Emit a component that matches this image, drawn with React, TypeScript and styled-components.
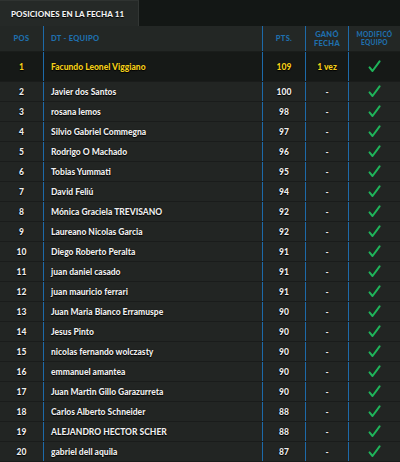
import React from "react";
import styled, { createGlobalStyle } from "styled-components";

const Global = createGlobalStyle`
  html, body { margin: 0; padding: 0; background: #131715; }
  body { font-family: Lato, "Open Sans", sans-serif; }
`;

const Page = styled.div`
  width: 400px;
  height: 462px;
  background: #131715;
  overflow: hidden;
`;

const TabBar = styled.div`
  display: flex;
  height: 26px;
`;

const Tab = styled.div`
  width: 139px;
  box-sizing: border-box;
  background: #252927;
  border-top: 1px solid #2f3331;
  border-right: 1px solid #323634;
  color: #f2f2f2;
  font-weight: 900;
  font-size: 8px;
  display: flex;
  align-items: center;
  padding-left: 11px;
  text-shadow: 0 1px 1px #000;
  letter-spacing: 0.1px;
`;

const cols = "43px 219px 43px 43px 52px";

const HeadRow = styled.div`
  display: grid;
  grid-template-columns: ${cols};
  height: 26px;
  background: #232725;
  border-bottom: 1px solid #1a1d1b;
  box-sizing: border-box;
`;

const HeadCell = styled.div<{ $line?: boolean; $left?: boolean; $small?: boolean }>`
  display: flex;
  align-items: center;
  justify-content: ${(p) => (p.$left ? "flex-start" : "center")};
  padding-left: ${(p) => (p.$left ? "7px" : "0")};
  text-align: center;
  border-left: ${(p) => (p.$line ? "1px solid #1d6aa9" : "none")};
  color: #1f6fae;
  font-weight: 900;
  font-size: ${(p) => (p.$small ? "6.5px" : "7.5px")};
  line-height: ${(p) => (p.$small ? "7.5px" : "9px")};
  letter-spacing: 0.3px;
  text-transform: uppercase;
`;

const Row = styled.div<{ $top?: boolean }>`
  display: grid;
  grid-template-columns: ${cols};
  height: ${(p) => (p.$top ? "30px" : "20px")};
  background: ${(p) => (p.$top ? "#161917" : "#222523")};
  border-bottom: 1px solid #1a1c1b;
  box-sizing: border-box;
`;

const Cell = styled.div<{ $line?: boolean; $left?: boolean; $gold?: boolean }>`
  display: flex;
  align-items: center;
  justify-content: ${(p) => (p.$left ? "flex-start" : "center")};
  padding-left: ${(p) => (p.$left ? "7px" : "0")};
  border-left: ${(p) => (p.$line ? "1px solid #1d6aa9" : "none")};
  color: ${(p) => (p.$gold ? "#f3cf1c" : "#eeeeee")};
  font-weight: 900;
  font-size: 8.5px;
  text-shadow: 0 1px 1px #000, 0 0 1px #000;
  white-space: nowrap;
`;

const Check = () => (
  <svg width="13" height="13" viewBox="0 0 13 13">
    <path
      d="M1.5 7.4 L4.5 11 L11.6 1.4"
      fill="none"
      stroke="#1fb45a"
      strokeWidth="2"
      strokeLinecap="round"
      strokeLinejoin="round"
    />
  </svg>
);

const rows: [string, number][] = [
  ["Facundo Leonel Viggiano", 109],
  ["Javier dos Santos", 100],
  ["rosana lemos", 98],
  ["Silvio Gabriel Commegna", 97],
  ["Rodrigo O Machado", 96],
  ["Tobias Yummati", 95],
  ["David Feliú", 94],
  ["Mónica Graciela TREVISANO", 92],
  ["Laureano Nicolas Garcia", 92],
  ["Diego Roberto Peralta", 91],
  ["juan daniel casado", 91],
  ["juan mauricio ferrari", 91],
  ["Juan Maria Bianco Erramuspe", 90],
  ["Jesus Pinto", 90],
  ["nicolas fernando wolczasty", 90],
  ["emmanuel amantea", 90],
  ["Juan Martin Gillo Garazurreta", 90],
  ["Carlos Alberto Schneider", 88],
  ["ALEJANDRO HECTOR SCHER", 88],
  ["gabriel dell aquila", 87],
];

export default function App() {
  return (
    <Page>
      <Global />
      <TabBar>
        <Tab>POSICIONES EN LA FECHA 11</Tab>
      </TabBar>
      <HeadRow>
        <HeadCell>Pos</HeadCell>
        <HeadCell $line $left>DT - Equipo</HeadCell>
        <HeadCell $line>Pts.</HeadCell>
        <HeadCell $line>
          Ganó
          <br />
          Fecha
        </HeadCell>
        <HeadCell $line $small>
          Modificó
          <br />
          Equipo
        </HeadCell>
      </HeadRow>
      {rows.map(([name, pts], i) => {
        const top = i === 0;
        return (
          <Row key={i} $top={top}>
            <Cell $gold={top}>{i + 1}</Cell>
            <Cell $line $left $gold={top}>
              {name}
            </Cell>
            <Cell $line $gold={top}>
              {pts}
            </Cell>
            <Cell $line $gold={top}>
              {top ? "1 vez" : "-"}
            </Cell>
            <Cell $line>
              <Check />
            </Cell>
          </Row>
        );
      })}
    </Page>
  );
}
